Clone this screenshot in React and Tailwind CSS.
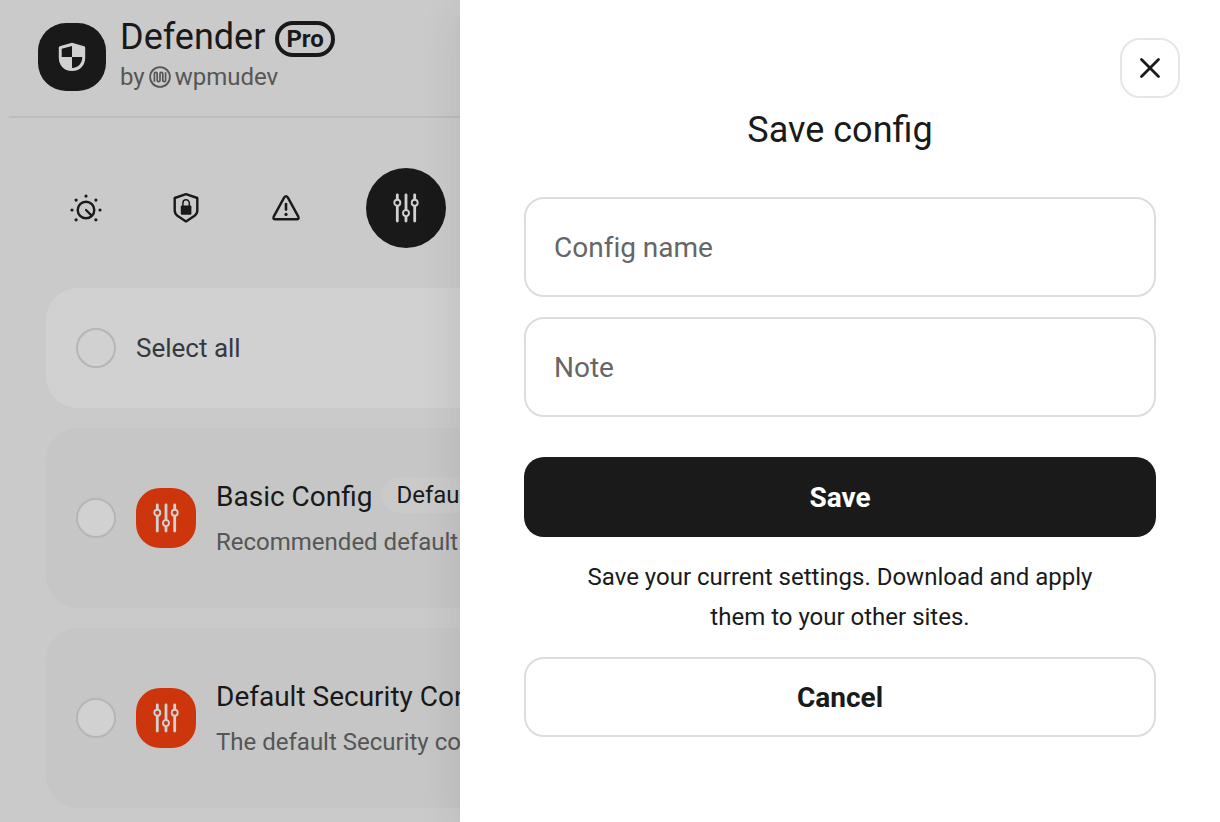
import React from "react";

function SlidersIcon({ hole }) {
  return (
    <svg viewBox="0 0 32 32" className="size-8" fill="none" stroke="#fff" aria-hidden="true">
      <path d="M7.3 2.8v26.2M16 2.8v26.2M24.7 2.8v26.2" strokeWidth="2.8" strokeLinecap="round" />
      <g className={hole} strokeWidth="1.9">
        <circle cx="7.3" cy="10.8" r="3" />
        <circle cx="16" cy="21.1" r="3" />
        <circle cx="24.7" cy="10.8" r="3" />
      </g>
    </svg>
  );
}

function ShieldLogo() {
  return (
    <svg viewBox="0 0 32 32" className="size-8" aria-hidden="true">
      <path
        d="M16 1.8 L28.2 5.2 Q29.2 5.6 29.2 6.8 V16.5 C29.2 24 24.5 30 16 30 C7.5 30 2.8 24 2.8 16.5 V6.8 Q2.8 5.6 3.8 5.2 Z"
        fill="#fff"
      />
      <path d="M16 5 V16 H5.7 V7.8 Z" fill="#1a1a1a" />
      <path d="M16 16 H26.3 C26.3 22 22.5 26.8 16 27 Z" fill="#1a1a1a" />
    </svg>
  );
}

function WpmudevMark() {
  return (
    <svg viewBox="0 0 24 24" className="size-6" fill="none" stroke="#666" aria-hidden="true">
      <circle cx="12" cy="12" r="9.9" strokeWidth="1.8" />
      <path
        d="M6.4 16.8V8.8a1.4 1.4 0 0 1 2.8 0v6.4a1.4 1.4 0 0 0 2.8 0V8.8a1.4 1.4 0 0 1 2.8 0v6.4a1.4 1.4 0 0 0 2.8 0V7.2"
        strokeWidth="1.7"
      />
    </svg>
  );
}

function KnobIcon() {
  return (
    <svg viewBox="0 0 32 32" className="size-8" aria-hidden="true">
      <circle cx="16" cy="18" r="8.3" fill="none" stroke="#1a1a1a" strokeWidth="2.4" />
      <path d="M16 18l5.6 5.6" stroke="#1a1a1a" strokeWidth="2.2" strokeLinecap="round" />
      <g fill="#1a1a1a">
        <circle cx="16" cy="4.1" r="1.6" />
        <circle cx="6.1" cy="8.1" r="1.6" />
        <circle cx="25.9" cy="8.1" r="1.6" />
        <circle cx="2" cy="18" r="1.6" />
        <circle cx="30" cy="18" r="1.6" />
        <circle cx="6.1" cy="27.8" r="1.6" />
        <circle cx="25.9" cy="27.8" r="1.6" />
      </g>
    </svg>
  );
}

function ShieldLockIcon() {
  return (
    <svg viewBox="0 0 32 32" className="size-8" fill="none" stroke="#1a1a1a" aria-hidden="true">
      <path
        d="M16 2.2L27.3 6V18.6C27.3 21 26.4 22.4 24.6 23.8L16 29.4L7.4 23.8C5.6 22.4 4.7 21 4.7 18.6V6Z"
        strokeWidth="2.4"
        strokeLinejoin="round"
      />
      <rect x="10.8" y="13.4" width="10.6" height="9.4" rx="1.2" fill="#1a1a1a" stroke="none" />
      <path d="M12.9 14V11a3.2 3.2 0 0 1 6.4 0v3" strokeWidth="1.5" />
    </svg>
  );
}

function WarningIcon() {
  return (
    <svg viewBox="0 0 32 32" className="size-8" fill="none" stroke="#1a1a1a" aria-hidden="true">
      <path
        d="M14.2 5.4Q16 3 17.8 5.4L28.3 24.6Q29.3 27.2 26.8 27.2H5.2Q2.7 27.2 3.7 24.6Z"
        strokeWidth="2.4"
        strokeLinejoin="round"
      />
      <path d="M16 12v5.6" strokeWidth="2.6" strokeLinecap="round" />
      <circle cx="16" cy="22.4" r="1.6" fill="#1a1a1a" stroke="none" />
    </svg>
  );
}

function Check({ label }) {
  return (
    <input
      type="checkbox"
      aria-label={label}
      className="size-10 shrink-0 appearance-none rounded-full border-2 border-[#ddd] bg-white checked:bg-[#1a1a1a]"
    />
  );
}

function ConfigRow({ name, tag, description }) {
  return (
    <li className="flex h-[180px] items-center gap-5 rounded-[32px] bg-[#f2f2f2] px-[30px]">
      <Check label={name} />
      <span className="flex size-[60px] shrink-0 items-center justify-center rounded-3xl bg-[#fb3e09]">
        <SlidersIcon hole="fill-[#fb3e09]" />
      </span>
      <div className="flex flex-col gap-1 pt-1 whitespace-nowrap">
        <div className="flex items-start gap-2.5">
          <h2 className="text-[28px] leading-10">{name}</h2>
          {tag && <span className="rounded-full bg-[#f7f7f7] px-3.5 text-2xl leading-9">{tag}</span>}
        </div>
        <p className="text-2xl leading-[42px] text-[#666]">{description}</p>
      </div>
    </li>
  );
}

const tabs = [
  { name: "Dashboard", icon: <KnobIcon /> },
  { name: "Security", icon: <ShieldLockIcon /> },
  { name: "Issues", icon: <WarningIcon /> },
  { name: "Configs", icon: <SlidersIcon hole="fill-[#1a1a1a]" />, active: true },
];

function Field({ id, label }) {
  return (
    <input
      id={id}
      type="text"
      aria-label={label}
      placeholder={label}
      className="h-[100px] w-full rounded-[20px] border-2 border-[#ddd] bg-white px-7 text-[28px] [font-variant-ligatures:none] placeholder:text-[#666]"
    />
  );
}

export default function App() {
  return (
    <div className="relative h-screen overflow-hidden bg-[#f7f7f7] font-['Roboto',sans-serif] text-[#1a1a1a]">
      <main>
        <header className="ml-[9px] flex h-[118px] gap-3.5 border-b-2 border-[#e6e6e6] pt-[17px] pl-[29px]">
          <span className="mt-1.5 flex size-[68px] shrink-0 items-center justify-center rounded-[28px] bg-[#1a1a1a]">
            <ShieldLogo />
          </span>
          <div>
            <div className="flex h-10 items-end gap-2.5">
              <h1 className="text-4xl leading-10">Defender</h1>
              <span className="rounded-full border-4 border-[#1a1a1a] px-[7px] text-2xl leading-7 font-bold">Pro</span>
            </div>
            <p className="flex items-center gap-[3px] text-2xl leading-10 text-[#666]">
              by <WpmudevMark /> wpmudev
            </p>
          </div>
        </header>

        <nav className="flex gap-5 px-[46px] pt-[50px]">
          {tabs.map((tab) => (
            <button
              key={tab.name}
              type="button"
              aria-label={tab.name}
              className={
                tab.active
                  ? "ml-5 flex size-20 items-center justify-center rounded-full bg-[#1a1a1a]"
                  : "flex size-20 items-center justify-center rounded-full"
              }
            >
              {tab.icon}
            </button>
          ))}
        </nav>

        <div className="flex flex-col gap-5 px-[46px] pt-10">
          <label className="flex h-[120px] items-center gap-5 rounded-[32px] bg-white px-[30px] text-[26px] leading-9 text-[#3c434a]">
            <Check />
            Select all
          </label>
          <ul className="flex flex-col gap-5">
            <ConfigRow name="Basic Config" tag="Default" description="Recommended default protection for every site" />
            <ConfigRow name="Default Security Config" description="The default Security config for new sites" />
          </ul>
        </div>
      </main>

      <div className="absolute inset-0 flex justify-end bg-[#1a1a1a]/20">
        <section
          role="dialog"
          aria-modal="true"
          aria-labelledby="drawer-title"
          className="flex w-[760px] max-w-full flex-col overflow-y-auto bg-white px-16 shadow-[0_8px_40px_rgba(0,0,0,0.1)]"
        >
          <button
            type="button"
            aria-label="Close"
            className="mt-[38px] -mr-6 flex size-[60px] shrink-0 items-center justify-center self-end rounded-[20px] border-2 border-[#e6e6e6]"
          >
            <svg viewBox="0 0 32 32" className="size-8" stroke="#1a1a1a" strokeWidth="2.8" strokeLinecap="round" aria-hidden="true">
              <path d="M7.5 7.5l17 17M24.5 7.5l-17 17" />
            </svg>
          </button>
          <h2 id="drawer-title" className="mt-2 text-center text-4xl leading-[48px]">Save config</h2>
          <form className="mt-[43px] flex flex-col gap-5">
            <Field id="config-name" label="Config name" />
            <Field id="config-note" label="Note" />
            <button type="button" className="mt-5 h-20 rounded-[20px] bg-[#1a1a1a] pt-0.5 text-[28px] leading-10 font-bold text-white">
              Save
            </button>
            <p className="px-12 text-center text-2xl leading-10">
              Save your current settings. Download and apply them to your other sites.
            </p>
            <button type="button" className="h-20 rounded-[20px] border-2 border-[#ddd] bg-white pt-0.5 text-[28px] leading-10 font-bold">
              Cancel
            </button>
          </form>
        </section>
      </div>
    </div>
  );
}
